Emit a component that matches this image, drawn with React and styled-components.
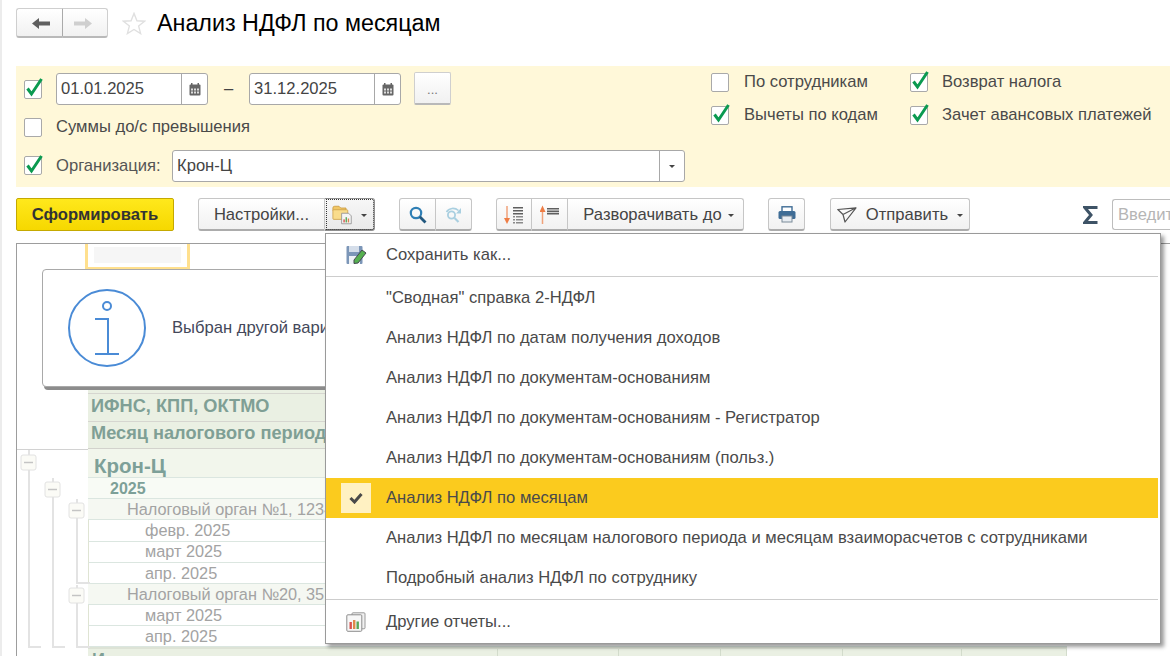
import styled, { createGlobalStyle } from "styled-components";

const GlobalStyle = createGlobalStyle`
  html, body {
    margin: 0;
    height: 100%;
    overflow: hidden;
    background: #fff;
    font-family: "Liberation Sans", Arial, sans-serif;
    font-size: 16.6px;
    color: #4a4a4a;
  }
  * { box-sizing: border-box; }
`;

const Page = styled.div`
  position: relative;
  width: 1170px;
  height: 656px;
  overflow: hidden;
  padding-left: 14px;
  border-left: 2px solid #ececec;
`;

const Header = styled.div`
  display: flex;
  align-items: flex-start;
  height: 66px;
  padding-top: 8px;
`;

const NavGroup = styled.div`
  display: flex;
  width: 92px;
  height: 30px;
  margin-right: 14px;
`;

const btnFace = `
  background: linear-gradient(#fff, #f1f1f1);
  border: 1px solid #cfcfcf;
  border-bottom: 2px solid #b9b9b9;
`;

const NavButton = styled.div`
  flex: 1;
  display: flex;
  align-items: center;
  justify-content: center;
  padding-top: 2px;
  ${btnFace}
  &:first-child { padding-left: 3px; border-radius: 3px 0 0 3px; border-right-color: #aaa; }
  &:last-child { padding-right: 3px; border-radius: 0 3px 3px 0; border-left: 0; }
`;

const StarSlot = styled.span`
  display: flex;
  margin-top: 4px;
`;

const Title = styled.h1`
  margin: 2px 0 0 11px;
  font-size: 23.3px;
  font-weight: 400;
  line-height: 26px;
  color: #000;
`;

const Filter = styled.div`
  display: flex;
  height: 121px;
  padding-left: 8px;
  background: #fff8d9;
`;

const FilterLeft = styled.div`
  width: 687px;
  display: flex;
  flex-direction: column;
`;

const FilterRow = styled.div`
  display: flex;
  align-items: center;
  height: ${({ $h }) => $h || 32}px;
  margin-top: ${({ $mt }) => $mt || 0}px;
`;

const FilterRight = styled.div`
  display: grid;
  grid-template-columns: 199px auto;
  grid-auto-rows: 30px;
  row-gap: 3px;
  padding-top: 1px;
`;

const CheckLabel = styled.label`
  display: flex;
  align-items: center;
`;

const Box = styled.span`
  display: flex;
  flex: none;
  align-items: center;
  justify-content: center;
  width: 18px;
  height: 19px;
  margin-right: ${({ $mr }) => $mr || 14}px;
  background: #fff;
  border: 1px solid #a9a9a9;
  border-radius: 2px;
  svg { overflow: visible; }
`;

const Field = styled.div`
  display: flex;
  align-items: center;
  width: ${({ $w }) => $w}px;
  height: 32px;
  background: #fff;
  border: 1px solid #a8a8a8;
  border-radius: 3px;
`;

const FieldText = styled.span`
  flex: 1;
  padding-left: 4px;
  color: #444;
`;

const FieldTail = styled.span`
  display: flex;
  align-items: center;
  justify-content: center;
  width: ${({ $w }) => $w}px;
  height: 100%;
  border-left: 1px solid #a8a8a8;
`;

const Dash = styled.span`
  width: 41px;
  text-align: center;
  color: #444;
`;

const DotsButton = styled.div`
  display: flex;
  align-items: center;
  justify-content: center;
  width: 37px;
  height: 33px;
  margin: -1px 0 0 13px;
  padding-top: 2px;
  font-size: 13px;
  color: #777;
  ${btnFace}
  border-radius: 2px;
`;

const OrgLabel = styled.span`
  width: 116px;
  color: #555;
`;

const Toolbar = styled.div`
  display: flex;
  align-items: stretch;
  height: 33px;
  margin-top: 11px;
`;

const MainButton = styled.div`
  display: flex;
  align-items: center;
  justify-content: center;
  width: 158px;
  margin-right: 24px;
  padding-top: 1px;
  font-weight: 700;
  color: #333;
  background: linear-gradient(#ffe81c, #f6d800);
  border: 1px solid #c5a900;
  border-radius: 2px;
`;

const ToolGroup = styled.div`
  display: flex;
  margin-right: ${({ $mr }) => $mr || 0}px;
`;

const ToolButton = styled.div`
  display: flex;
  align-items: center;
  justify-content: center;
  gap: ${({ $gap }) => $gap || 0}px;
  width: ${({ $w }) => $w}px;
  padding-top: 1px;
  padding-left: ${({ $pl }) => $pl || 0}px;
  color: #444;
  ${btnFace}
  border-color: #c6c6c6;
  border-bottom-color: #acacac;
  &:not(:first-child) { border-left: 0; }
  &:first-child { border-radius: 3px 0 0 3px; }
  &:last-child { border-radius: 0 3px 3px 0; }
  &:only-child { border-radius: 3px; }
`;

const ActiveButton = styled(ToolButton)`
  outline: 1px dotted #333;
  outline-offset: -2px;
  border-color: #8f8f8f;
  background: linear-gradient(#f7f7f7, #eaeaea);
`;

const Caret = styled.span`
  width: 0;
  height: 0;
  margin-top: 2px;
  border: 3px solid transparent;
  border-top: 3px solid #444;
  border-bottom: 0;
`;

const SumIcon = styled.span`
  display: flex;
  align-items: center;
  justify-content: center;
  width: 30px;
  margin: 0 7px 0 105px;
`;

const SearchInput = styled.div`
  display: flex;
  align-items: center;
  flex: 1;
  height: 31px;
  margin-top: 1px;
  padding-left: 5px;
  overflow: hidden;
  white-space: nowrap;
  color: #b5b5b5;
  background: #fff;
  border: 1px solid #bdbdbd;
  border-right: 0;
  border-radius: 3px 0 0 3px;
`;

const Report = styled.div`
  height: 413px;
  margin-top: 12px;
  border-top: 1px solid #9d9d9d;
  border-left: 1px solid #9d9d9d;
`;

const TopCellArea = styled.div`
  height: 128px;
  padding-left: 68px;
`;

const PickedCell = styled.div`
  width: 105px;
  height: 25px;
  padding: 3px 6px 4px;
  border: solid #ffe08e;
  border-width: 0 3px 2px;
  div {
    height: 100%;
    background: #f6f6f6;
  }
`;

const Table = styled.div`
  display: flex;
  flex-direction: column;
  width: 1050px;
`;

const Spacer = styled.div`
  margin-left: 71px;
  width: 979px;
  height: 22px;
  background: #eaf0e3;
  border-bottom: 1px solid #d6d6d0;
`;

const Row = styled.div`
  display: flex;
  align-items: center;
  margin-left: 71px;
  width: 979px;
  height: ${({ $h }) => $h}px;
  padding-left: ${({ $pl }) => $pl || 3}px;
  padding-top: ${({ $shift }) => ($shift > 0 ? $shift : 0)}px;
  padding-bottom: ${({ $shift }) => ($shift < 0 ? -$shift : 0)}px;
  background: ${({ $bg }) => $bg || "#fff"};
  color: ${({ $color }) => $color || "#a3a3a3"};
  font-size: ${({ $fs }) => $fs || 16.3}px;
  font-weight: ${({ $bold }) => ($bold ? 700 : 400)};
  border-bottom: 1px solid ${({ $line }) => $line || "#dbe6e0"};
  border-left: ${({ $white }) => ($white ? "1px solid #dfe4d3" : "0")};
  white-space: nowrap;
`;

const HeadDivider = styled.div`
  height: 1px;
  width: 71px;
  margin-bottom: -1px;
  background: #d2d2d2;
`;

const TotalRow = styled.div`
  display: grid;
  grid-template-columns: 410px 121px 102px 122px 119px 105px;
  margin-left: 71px;
  width: 979px;
  height: 14px;
  background: #eaf0e3;
  border-top: 2px solid #dde3d6;
  color: #7f9f95;
  font-size: 18px;
  font-weight: 700;
`;

const TotalCell = styled.div`
  padding-left: 4px;
  line-height: 22px;
  border-right: 1px solid #d3dccc;
`;

const Tree = styled.svg`
  position: absolute;
  left: -2px;
  top: 449px;
`;

const Notice = styled.div`
  position: absolute;
  left: 40px;
  top: 269px;
  display: flex;
  align-items: center;
  width: 420px;
  height: 118px;
  padding-left: 24px;
  background: #fff;
  border: 1px solid #a9a9a9;
  border-radius: 4px;
  box-shadow: 2px 3px 0 #8c8c8c;
`;

const NoticeText = styled.span`
  margin-left: 25px;
  white-space: nowrap;
  color: #44485a;
`;

const Menu = styled.div`
  position: absolute;
  left: 323px;
  top: 233px;
  width: 836px;
  height: 411px;
  padding: 0 2px 0 0;
  background: #fff;
  border: 1px solid #9a9a9a;
  box-shadow: 3px 3px 4px rgba(0, 0, 0, 0.4);
`;

const MenuItem = styled.div`
  display: flex;
  align-items: center;
  height: ${({ $h }) => $h || 40}px;
  background: ${({ $active }) => ($active ? "#fbcb1e" : "transparent")};
  color: #4a4a4a;
  white-space: nowrap;
`;

const MenuIcon = styled.span`
  display: flex;
  flex: none;
  align-items: center;
  justify-content: center;
  width: 60px;
`;

const CheckTile = styled.span`
  display: flex;
  align-items: center;
  justify-content: center;
  width: 30px;
  height: 30px;
  background: #fff1c2;
`;

const MenuDivider = styled.div`
  height: 1px;
  margin: 1px 0;
  background: #cdcdcd;
`;

const Check = () => (
  <svg width="18" height="18" viewBox="0 0 18 18">
    <path d="M3.5 8.5 L7.5 14 L17.5 -1" fill="none" stroke="#0b9a50" strokeWidth="3" />
  </svg>
);

const CheckBox = ({ checked, mr }) => <Box $mr={mr}>{checked && <Check />}</Box>;

const ArrowLeft = ({ color }) => (
  <svg width="18" height="11" viewBox="0 0 18 11">
    <path d="M0 5.5 L7 0 V3.5 H18 V7.5 H7 V11 Z" fill={color} />
  </svg>
);

const ArrowRight = ({ color }) => (
  <svg width="18" height="11" viewBox="0 0 18 11">
    <path d="M18 5.5 L11 0 V3.5 H0 V7.5 H11 V11 Z" fill={color} />
  </svg>
);

const Star = () => (
  <svg width="24" height="23" viewBox="0 0 26 25">
    <path d="M13 1.5 L16.2 9.5 L24.5 10 L18 15.2 L20.2 23.5 L13 19 L5.8 23.5 L8 15.2 L1.5 10 L9.8 9.5 Z" fill="#fff" stroke="#e0e0e0" strokeWidth="1.5" />
  </svg>
);

const Calendar = () => (
  <svg width="12" height="13" viewBox="0 0 12 13">
    <rect x="0.5" y="1.5" width="11" height="11" rx="1" fill="#666" />
    <rect x="2" y="0" width="1.5" height="3" fill="#666" />
    <rect x="8.5" y="0" width="1.5" height="3" fill="#666" />
    <path d="M2 5.5h2v2H2zM5 5.5h2v2H5zM8 5.5h2v2H8zM2 8.5h2v2H2zM5 8.5h2v2H5zM8 8.5h2v2H8z" fill="#ddd" />
  </svg>
);

const FolderReport = () => (
  <svg width="21" height="20" viewBox="0 0 24 22">
    <path d="M1 3 Q1 1 3 1 H8 L10 3 H16 V6 H1 Z" fill="#f1c766" stroke="#c8983c" strokeWidth="0.9" />
    <rect x="1" y="5" width="17" height="11" rx="1" fill="#f9dc8c" stroke="#cba04a" strokeWidth="0.9" />
    <path d="M11 9 H19 L22 12 V21 H11 Z" fill="#f5f5f5" stroke="#8c8c8c" strokeWidth="0.9" />
    <rect x="13" y="16" width="1.6" height="3.5" fill="#d9534f" />
    <rect x="15.5" y="13.5" width="1.6" height="6" fill="#5aa85a" />
    <rect x="18" y="15" width="1.6" height="4.5" fill="#d9834f" />
  </svg>
);

const Search = () => (
  <svg width="18" height="18" viewBox="0 0 18 18">
    <circle cx="7" cy="7" r="5.2" fill="none" stroke="#2f7fb5" strokeWidth="2.2" />
    <path d="M10.8 10.8 L16.5 16.5" stroke="#22587f" strokeWidth="2.8" />
  </svg>
);

const SearchAgain = () => (
  <svg width="20" height="18" viewBox="0 0 20 18">
    <circle cx="7.5" cy="9" r="3.6" fill="none" stroke="#a9cfe0" strokeWidth="1.8" />
    <path d="M10.5 12 L14.5 16" stroke="#a9cfe0" strokeWidth="2.2" />
    <path d="M2.5 6 C5 1.5 11 1.5 14.5 4.5" fill="none" stroke="#a9cfe0" strokeWidth="1.6" />
    <path d="M17 2 V7.5 H12 Z" fill="#a9cfe0" />
  </svg>
);

const SortDown = () => (
  <svg width="20" height="20" viewBox="0 0 20 20">
    <path d="M3 1 V16" stroke="#f0a27a" strokeWidth="1.5" />
    <path d="M0 13 L3 19 L6 13 Z" fill="#ee7d45" />
    <path d="M9 2h10v1.5H9zM9 5h10v1.5H9zM9 8h10v1.5H9z" fill="#5f5f5f" />
    <path d="M9 11h2v1.5H9zM12 11h7v1.5h-7zM9 14h2v1.5H9zM12 14h7v1.5h-7zM9 17h2v1.5H9zM12 17h7v1.5h-7z" fill="#8a8a8a" />
  </svg>
);

const SortUp = () => (
  <svg width="20" height="20" viewBox="0 0 20 20">
    <path d="M2.5 4 V19" stroke="#f0a27a" strokeWidth="1.5" />
    <path d="M-0.5 7 L2.5 0.5 L5.5 7 Z" fill="#ee7d45" />
    <path d="M7 3h12v1.6H7zM7 5.4h12V7H7zM7 7.8h12v1.6H7z" fill="#5f5f5f" />
  </svg>
);

const Printer = () => (
  <svg width="18" height="17" viewBox="0 0 18 17">
    <rect x="4" y="0.8" width="10" height="5" fill="#fff" stroke="#3f6d96" strokeWidth="1.4" />
    <rect x="0.5" y="5" width="17" height="8" rx="1.5" fill="#3f6d96" />
    <rect x="4" y="10" width="10" height="6" fill="#e8edf2" stroke="#7a8a98" strokeWidth="1" />
  </svg>
);

const Plane = () => (
  <svg width="20" height="16" viewBox="0 0 20 16">
    <path d="M0.8 2.5 L19 0.8 L8 15 L6 7.5 Z M6 7.5 L19 0.8" fill="none" stroke="#555" strokeWidth="1.2" strokeLinejoin="round" />
  </svg>
);

const Sigma = () => (
  <svg width="15" height="18" viewBox="0 0 15 18">
    <path d="M14.5 1.5 H1.8 L8 9 L1.8 16.5 H14.5" fill="none" stroke="#3e5366" strokeWidth="3" />
  </svg>
);

const InfoIcon = () => (
  <svg width="80" height="80" viewBox="0 0 80 80">
    <g fill="none" stroke="#4a8bd6" strokeWidth="2">
      <circle cx="40" cy="40" r="38" />
      <circle cx="40" cy="18" r="4" />
    </g>
    <path d="M28 31 H41 V66 M28 66 H52" fill="none" stroke="#4a8bd6" strokeWidth="2" />
  </svg>
);

const SaveIcon = () => (
  <svg width="21" height="20" viewBox="0 0 21 20">
    <rect x="0.5" y="1" width="16" height="18" rx="1" fill="#7c96b8" />
    <rect x="3" y="1" width="10" height="6" fill="#d5deea" />
    <rect x="3" y="11" width="11" height="8" fill="#eef2f6" />
    <path d="M8 15 L16 5 L20 8 L12 18 L8 18.5 Z" fill="#55b04f" stroke="#44494f" strokeWidth="1" />
  </svg>
);

const ReportsIcon = () => (
  <svg width="20" height="20" viewBox="0 0 20 20">
    <rect x="6" y="0.8" width="13" height="16" rx="1" fill="#f1f1f1" stroke="#9a9a9a" />
    <rect x="0.8" y="2.8" width="15" height="16.5" rx="1" fill="#f7f7f7" stroke="#8c8c8c" />
    <rect x="3.5" y="10" width="2.4" height="7" fill="#d9534f" />
    <rect x="7" y="8" width="2.4" height="9" fill="#e08a4a" />
    <rect x="10.5" y="9.5" width="2.4" height="7.5" fill="#5aa85a" />
  </svg>
);

const TickIcon = () => (
  <svg width="14" height="12" viewBox="0 0 14 12">
    <path d="M1.5 6 L5.5 10 L12.5 2" fill="none" stroke="#4a4a4a" strokeWidth="3" />
  </svg>
);

const TreeBox = ({ x, y }) => (
  <g>
    <rect x={x} y={y} width="15" height="15" rx="2" fill="#fbfbf6" stroke="#e2e2e2" />
    <path d={`M${x + 3} ${y + 7.5} H${x + 12}`} stroke="#c4c4c4" strokeWidth="1.5" />
  </g>
);

const menuReports = [
  "\"Сводная\" справка 2-НДФЛ",
  "Анализ НДФЛ по датам получения доходов",
  "Анализ НДФЛ по документам-основаниям",
  "Анализ НДФЛ по документам-основаниям - Регистратор",
  "Анализ НДФЛ по документам-основаниям (польз.)",
  "Анализ НДФЛ по месяцам",
  "Анализ НДФЛ по месяцам налогового периода и месяцам взаиморасчетов с сотрудниками",
  "Подробный анализ НДФЛ по сотруднику",
];

const App = () => {
  return (
    <>
      <GlobalStyle />
      <Page>
        <Header>
          <NavGroup>
            <NavButton>
              <ArrowLeft color="#5f5f5f" />
            </NavButton>
            <NavButton>
              <ArrowRight color="#cfcfcf" />
            </NavButton>
          </NavGroup>
          <StarSlot>
            <Star />
          </StarSlot>
          <Title>Анализ НДФЛ по месяцам</Title>
        </Header>

        <Filter>
          <FilterLeft>
            <FilterRow $mt={7}>
              <CheckBox checked />
              <Field $w={152}>
                <FieldText>01.01.2025</FieldText>
                <FieldTail $w={26}>
                  <Calendar />
                </FieldTail>
              </Field>
              <Dash>–</Dash>
              <Field $w={152}>
                <FieldText>31.12.2025</FieldText>
                <FieldTail $w={26}>
                  <Calendar />
                </FieldTail>
              </Field>
              <DotsButton>...</DotsButton>
            </FilterRow>
            <FilterRow $mt={6}>
              <CheckBox />
              Суммы до/с превышения
            </FilterRow>
            <FilterRow $mt={7} $h={31}>
              <CheckBox checked />
              <OrgLabel>Организация:</OrgLabel>
              <Field $w={513}>
                <FieldText>Крон-Ц</FieldText>
                <FieldTail $w={25}>
                  <Caret />
                </FieldTail>
              </Field>
            </FilterRow>
          </FilterLeft>
          <FilterRight>
            <CheckLabel>
              <CheckBox mr={15} />
              По сотрудникам
            </CheckLabel>
            <CheckLabel>
              <CheckBox checked mr={14} />
              Возврат налога
            </CheckLabel>
            <CheckLabel>
              <CheckBox checked mr={15} />
              Вычеты по кодам
            </CheckLabel>
            <CheckLabel>
              <CheckBox checked mr={14} />
              Зачет авансовых платежей
            </CheckLabel>
          </FilterRight>
        </Filter>

        <Toolbar>
          <MainButton>Сформировать</MainButton>
          <ToolGroup $mr={24}>
            <ToolButton $w={127}>Настройки...</ToolButton>
            <ActiveButton $w={50} $gap={8}>
              <FolderReport />
              <Caret />
            </ActiveButton>
          </ToolGroup>
          <ToolGroup $mr={24}>
            <ToolButton $w={37}>
              <Search />
            </ToolButton>
            <ToolButton $w={36}>
              <SearchAgain />
            </ToolButton>
          </ToolGroup>
          <ToolGroup $mr={24}>
            <ToolButton $w={36}>
              <SortDown />
            </ToolButton>
            <ToolButton $w={36}>
              <SortUp />
            </ToolButton>
            <ToolButton $w={176} $gap={6} $pl={6}>
              Разворачивать до
              <Caret />
            </ToolButton>
          </ToolGroup>
          <ToolGroup $mr={25}>
            <ToolButton $w={37}>
              <Printer />
            </ToolButton>
          </ToolGroup>
          <ToolGroup>
            <ToolButton $w={140} $gap={9}>
              <Plane />
              Отправить
              <Caret />
            </ToolButton>
          </ToolGroup>
          <SumIcon>
            <Sigma />
          </SumIcon>
          <SearchInput>Введите</SearchInput>
        </Toolbar>

        <Report>
          <TopCellArea>
            <PickedCell>
              <div />
            </PickedCell>
          </TopCellArea>
          <Table>
            <Spacer />
            <Row $h={28} $shift={-3} $bg="#eaf0e3" $color="#7f9f95" $bold $fs={18.2} $line="#d6d6d0">
              ИФНС, КПП, ОКТМО
            </Row>
            <Row $h={27} $shift={-3} $bg="#eaf0e3" $color="#7f9f95" $bold $fs={18.2} $line="#d2d2cc">
              Месяц налогового периода
            </Row>
            <HeadDivider />
            <Row $h={29} $shift={6} $pl={6} $bg="#f2f6ec" $color="#7da098" $bold $fs={20.5}>
              Крон-Ц
            </Row>
            <Row $h={21} $shift={2} $pl={22} $bg="#f8fbf5" $color="#7da098" $bold $fs={16}>
              2025
            </Row>
            <Row $h={21} $pl={39} $bg="#f5f8f2">
              Налоговый орган №1, 1234
            </Row>
            <Row $h={22} $pl={56} $white>
              февр. 2025
            </Row>
            <Row $h={21} $shift={-1} $pl={56} $white>
              март 2025
            </Row>
            <Row $h={21} $pl={56} $white>
              апр. 2025
            </Row>
            <Row $h={21} $pl={39} $bg="#f5f8f2">
              Налоговый орган №20, 3512
            </Row>
            <Row $h={21} $pl={56} $white>
              март 2025
            </Row>
            <Row $h={21} $pl={56} $white>
              апр. 2025
            </Row>
            <TotalRow>
              <TotalCell>Итого</TotalCell>
              <TotalCell />
              <TotalCell />
              <TotalCell />
              <TotalCell />
              <TotalCell />
            </TotalRow>
          </Table>
        </Report>

        <Tree width="90" height="205" viewBox="0 449 90 205">
          <g fill="none" stroke="#e3e3e3" strokeWidth="2">
            <path d="M29 450 V647 H41" />
            <path d="M53 478 V647 H65" />
            <path d="M77 499 V583 H90" />
            <path d="M77 585 V647 H90" />
          </g>
          <TreeBox x={21} y={455} />
          <TreeBox x={45} y={482} />
          <TreeBox x={69} y={503} />
          <TreeBox x={69} y={588} />
        </Tree>

        <Notice>
          <InfoIcon />
          <NoticeText>Выбран другой вариант отчета</NoticeText>
        </Notice>

        <Menu>
          <MenuItem $h={41}>
            <MenuIcon>
              <SaveIcon />
            </MenuIcon>
            Сохранить как...
          </MenuItem>
          <MenuDivider />
          {menuReports.map((title) => (
            <MenuItem key={title} $active={title === "Анализ НДФЛ по месяцам"}>
              <MenuIcon>
                {title === "Анализ НДФЛ по месяцам" && (
                  <CheckTile>
                    <TickIcon />
                  </CheckTile>
                )}
              </MenuIcon>
              {title}
            </MenuItem>
          ))}
          <MenuDivider />
          <MenuItem $h={42}>
            <MenuIcon>
              <ReportsIcon />
            </MenuIcon>
            Другие отчеты...
          </MenuItem>
        </Menu>
      </Page>
    </>
  );
};

export default App;
